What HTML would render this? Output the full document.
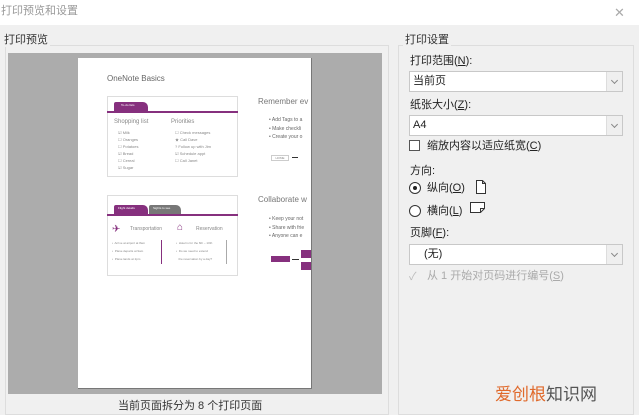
<!DOCTYPE html><html><head><meta charset="utf-8"><style>
*{margin:0;padding:0;box-sizing:border-box}
body{width:639px;height:408px;overflow:hidden;background:#f0f0f0;font-family:"Liberation Sans","Noto Sans CJK SC",sans-serif;position:relative;color:#222}
.a{position:absolute;white-space:nowrap}
.t{font-size:11px;line-height:13px}
.combo{position:absolute;left:409px;width:214px;height:21px;background:#fff;border:1px solid #c8c8c8;font-size:11px;line-height:19px;padding-left:3px}
.combo i{position:absolute;right:0;top:0;width:16px;height:19px;background:#efefef;border-left:1px solid #ddd}
.combo i:after{content:"";position:absolute;left:5px;top:6px;width:4px;height:4px;border-right:1px solid #888;border-bottom:1px solid #888;transform:rotate(45deg)}
.p{font-size:4px;line-height:7px;color:#888}
</style></head><body>
<div class="a" style="left:0;top:0;width:639px;height:25px;background:#fff"></div>
<div class="a t" style="left:1px;top:5px;color:#999">打印预览和设置</div>
<div class="a" style="left:614px;top:5px;color:#aaa;font-size:13px">✕</div>
<div class="a" style="left:5px;top:45px;width:384px;height:370px;border:1px solid #ddd"></div>
<div class="a t" style="left:2px;top:34px;background:#f0f0f0;padding:0 2px;color:#333">打印预览</div>
<div class="a" style="left:8px;top:53px;width:374px;height:341px;background:#acacac"></div>
<div class="a" style="left:78px;top:58px;width:234px;height:331px;background:#fff;border-right:1px solid #777;border-bottom:1px solid #777"></div>
<div class="a t" style="left:118px;top:400px;color:#333">当前页面拆分为 8 个打印页面</div>
<div class="a" style="left:107px;top:74px;font-size:8px;color:#666">OneNote Basics</div>
<div class="a" style="left:107px;top:96px;width:131px;height:81px;border:1px solid #ddd"></div>
<div class="a" style="left:114px;top:102px;width:34px;height:9px;background:#86307e;border-radius:2px 5px 0 0"></div>
<div class="a" style="left:121px;top:103px;font-size:3px;color:#fff">To-do lists</div>
<div class="a" style="left:107px;top:111px;width:131px;height:2px;background:#86307e"></div>
<div class="a" style="left:114px;top:119px;font-size:6px;color:#888">Shopping list</div>
<div class="a" style="left:171px;top:119px;font-size:6px;color:#888">Priorities</div>
<div class="a p" style="left:118px;top:129px">☑ Milk<br>☐ Oranges<br>☐ Potatoes<br>☑ Bread<br>☐ Cereal<br>☑ Sugar</div>
<div class="a p" style="left:175px;top:129px">☐ Check messages<br>★ Call Dave<br>? Follow up with Jim<br>☑ Schedule appt<br>☐ Call Janet</div>
<div class="a" style="left:107px;top:195px;width:131px;height:81px;border:1px solid #ddd"></div>
<div class="a" style="left:114px;top:205px;width:34px;height:9px;background:#86307e;border-radius:2px 5px 0 0"></div>
<div class="a" style="left:149px;top:205px;width:32px;height:9px;background:#777;border-radius:2px 5px 0 0"></div>
<div class="a" style="left:118px;top:206px;font-size:3px;color:#fff">Flight details</div>
<div class="a" style="left:153px;top:206px;font-size:3px;color:#fff">Sights to see</div>
<div class="a" style="left:107px;top:214px;width:131px;height:2px;background:#86307e"></div>
<div class="a" style="left:112px;top:224px;font-size:10px;color:#86307e">✈</div>
<div class="a" style="left:130px;top:226px;font-size:5px;color:#888">Transportation</div>
<div class="a" style="left:177px;top:222px;font-size:10px;color:#86307e">⌂</div>
<div class="a" style="left:196px;top:226px;font-size:5px;color:#888">Reservation</div>
<div class="a p" style="left:112px;top:239px;font-size:3px;line-height:8px">•&nbsp; Arrive at airport at 8am<br>•&nbsp; Plane departs at 9am<br>•&nbsp; Plane lands at 2pm</div>
<div class="a" style="left:161px;top:240px;width:1px;height:24px;background:#86307e"></div>
<div class="a p" style="left:176px;top:239px;font-size:3px;line-height:8px">•&nbsp; Hotel is for the 6th – 10th<br>•&nbsp; Do we need to extend<br>&nbsp;&nbsp; the reservation by a day?</div>
<div class="a" style="left:226px;top:240px;width:1px;height:24px;background:#aaa"></div>
<div class="a" style="left:258px;top:97px;font-size:8px;color:#777">Remember ev</div>
<div class="a p" style="left:269px;top:116px;font-size:5px;line-height:8.5px;color:#666">• Add Tags to a<br>• Make checkli<br>• Create your o</div>
<div class="a" style="left:271px;top:155px;width:18px;height:6px;border:1px solid #ccc;font-size:3px;color:#888;text-align:center;line-height:4px">HOME</div>
<div class="a" style="left:292px;top:157px;width:6px;height:1px;background:#333"></div>
<div class="a" style="left:258px;top:195px;font-size:8px;color:#777">Collaborate w</div>
<div class="a p" style="left:269px;top:215px;font-size:5px;line-height:8.5px;color:#666">• Keep your not<br>• Share with frie<br>• Anyone can e</div>
<div class="a" style="left:271px;top:256px;width:19px;height:6px;background:#86307e"></div>
<div class="a" style="left:292px;top:259px;width:7px;height:1px;background:#333"></div>
<div class="a" style="left:301px;top:250px;width:10px;height:8px;background:#86307e"></div>
<div class="a" style="left:301px;top:262px;width:10px;height:8px;background:#86307e"></div>
<div class="a" style="left:398px;top:45px;width:236px;height:370px;border:1px solid #ddd"></div>
<div class="a t" style="left:403px;top:34px;background:#f0f0f0;padding:0 2px;color:#333">打印设置</div>
<div class="a t" style="left:410px;top:55px">打印范围(<u>N</u>):</div>
<div class="combo" style="top:71px">当前页<i></i></div>
<div class="a t" style="left:410px;top:99px">纸张大小(<u>Z</u>):</div>
<div class="combo" style="top:115px">A4<i></i></div>
<div class="a" style="left:409px;top:140px;width:11px;height:11px;background:#fff;border:1px solid #555"></div>
<div class="a t" style="left:427px;top:140px">缩放内容以适应纸宽(<u>C</u>)</div>
<div class="a t" style="left:410px;top:165px">方向:</div>
<div class="a" style="left:409px;top:182px;width:12px;height:12px;border-radius:50%;background:#fff;border:1px solid #333"></div>
<div class="a" style="left:413px;top:186px;width:4px;height:4px;border-radius:50%;background:#222"></div>
<div class="a t" style="left:427px;top:182px">纵向(<u>O</u>)</div>
<svg class="a" style="left:475px;top:180px" width="12" height="14"><path d="M1.5 .5h6l3 3v10h-9z M7.5 .5v3h3" fill="#fff" stroke="#333"/></svg>
<div class="a" style="left:409px;top:205px;width:12px;height:12px;border-radius:50%;background:#fff;border:1px solid #333"></div>
<div class="a t" style="left:427px;top:205px">横向(<u>L</u>)</div>
<svg class="a" style="left:470px;top:202px" width="16" height="11"><path d="M.5 .5h14v6l-4 4h-10z M10.5 10.5v-4h4" fill="#fff" stroke="#333"/></svg>
<div class="a t" style="left:410px;top:227px">页脚(<u>F</u>):</div>
<div class="combo" style="top:244px;padding-left:14px">(无)<i></i></div>
<div class="a" style="left:409px;top:268px;font-size:11px;color:#bbb">✓</div>
<div class="a t" style="left:427px;top:270px;color:#aaa">从 1 开始对页码进行编号(<u>S</u>)</div>
<div class="a" style="left:495px;top:380px;font-size:17px;color:#e06a2c">爱创根<span style="color:#555">知识网</span></div>
</body></html>
